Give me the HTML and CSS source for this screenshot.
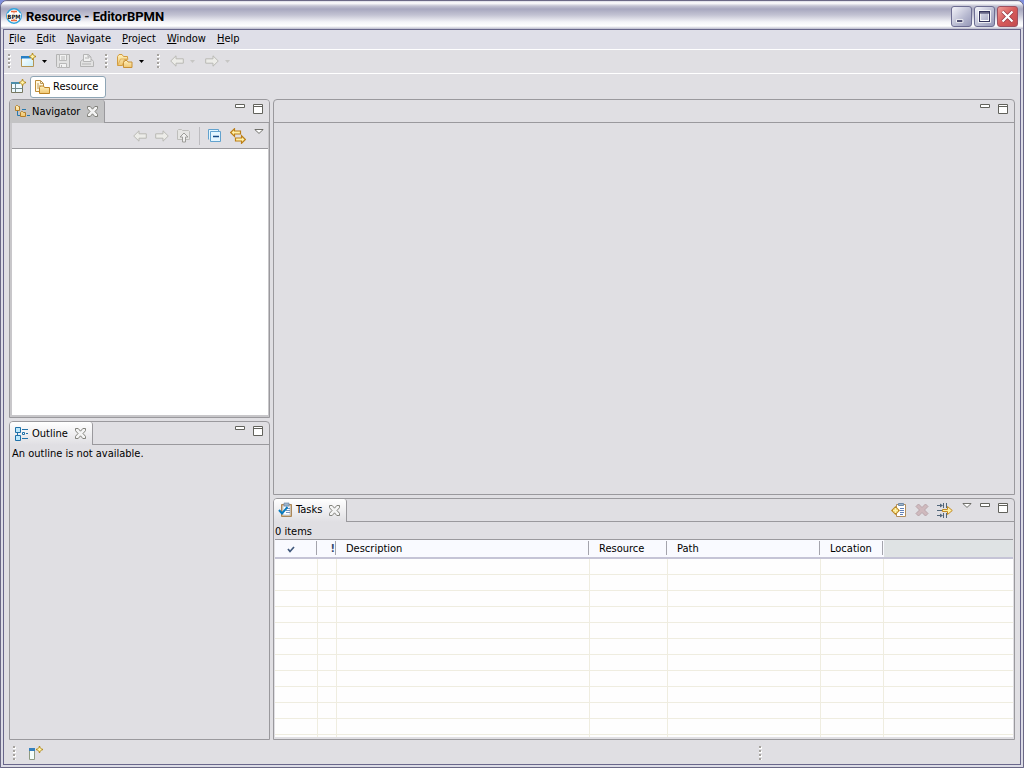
FILE: index.html
```html
<!DOCTYPE html>
<html lang="en">
<head>
<meta charset="utf-8">
<title>Resource - EditorBPMN</title>
<link rel="stylesheet" href="styles.css">
</head>
<body>
<svg class="defs" aria-hidden="true">
  <defs>
    <linearGradient id="gold" x1="0" y1="0" x2="0" y2="1"><stop offset="0" stop-color="#fff1bd"/><stop offset="1" stop-color="#efc773"/></linearGradient>
    <linearGradient id="blue" x1="0" y1="0" x2="1" y2="1"><stop offset="0" stop-color="#ffffff"/><stop offset="1" stop-color="#c4ecf8"/></linearGradient>
    <symbol id="spark" viewBox="0 0 7 7"><path d="M3.500 0v7M0 3.500h7" stroke="#b38b21" stroke-width="1.400"/><path d="M3.500 1 6 3.500 3.500 6 1 3.500z" fill="#fff3a8" stroke="#b38b21" stroke-width=".9"/></symbol>
    <symbol id="close" viewBox="0 0 11 11"><path d="M.500.500h2.700l2.300 2.700L7.800.500h2.700v2.200L8 5.500l2.500 2.800v2.200H7.800L5.500 7.800l-2.300 2.700H.500V8.300L3 5.500.500 2.700z" fill="#f4f4f4" stroke="#77776f" stroke-width=".9"/></symbol>
    <symbol id="min" viewBox="0 0 10 4"><path d="M.500.500h9v3h-9z" fill="#fff" stroke="#62625c"/></symbol>
    <symbol id="max" viewBox="0 0 10 10"><path d="M.500.500h9v9h-9zM.500 2.500h9" fill="#fff" stroke="#62625c"/></symbol>
    <symbol id="view" viewBox="0 0 10 5"><path d="M.800.500h8.400L5 4.400z" fill="#fff" stroke="#62625c" stroke-width=".9"/></symbol>
    <symbol id="back" viewBox="0 0 14 12"><path d="M.700 6 6 .800v3h7.300v4.400H6v3z" fill="#ecece8" stroke="#b9b9b4"/></symbol>
    <symbol id="forward" viewBox="0 0 14 12"><path d="M13.300 6 8 .800v3H.700v4.400H8v3z" fill="#ecece8" stroke="#b9b9b4"/></symbol>
    <symbol id="drop" viewBox="0 0 5 3"><path d="M0 0h5L2.500 3z" fill="currentColor"/></symbol>
  </defs>
</svg>
<div class="window">
  <header class="titlebar">
    <svg class="logo" viewBox="0 0 16 16" aria-hidden="true"><circle cx="8" cy="8" r="7.200" fill="#fff" stroke="#2fa4dc" stroke-width="1.500"/><path d="M5 3.500h6M5 12.500h6" stroke="#e8663c" stroke-width="1.300"/><path d="M8 3.500v9" stroke="#f08a60"/><path d="M1 5.500h14v5H1z" fill="#fff"/><text class="logo-text" x="8" y="10.500" text-anchor="middle">BPM</text></svg>
    <h1 class="title">Resource - EditorBPMN</h1>
    <button class="winbtn" aria-label="Minimize"><svg viewBox="0 0 21 21"><path d="M5 14h7v3H5z" fill="#36365e" stroke="#fff"/></svg></button>
    <button class="winbtn" aria-label="Maximize"><svg viewBox="0 0 21 21"><path d="M5 5h11v11H5z" fill="none" stroke="#fff" stroke-width="3"/><path d="M5 5h11v11H5zM5 6.500h11" fill="none" stroke="#34345c" stroke-width="1.200"/></svg></button>
    <button class="winbtn winbtn-close" aria-label="Close"><svg viewBox="0 0 21 21"><path d="m5 5 11 11M16 5 5 16" stroke="#8e3440" stroke-width="4"/><path d="m5 5 11 11M16 5 5 16" stroke="#fff" stroke-width="2.600"/></svg></button>
  </header>
  <div class="client">
    <nav class="menubar">
      <button class="menu"><u>F</u>ile</button><button class="menu"><u>E</u>dit</button><button class="menu"><u>N</u>avigate</button><button class="menu"><u>P</u>roject</button><button class="menu"><u>W</u>indow</button><button class="menu"><u>H</u>elp</button>
    </nav>
    <div class="toolbar">
      <span class="grip"></span>
      <button class="tool tool-first" aria-label="New"><svg class="i16" viewBox="0 0 16 16"><path d="M1.500 3.500h12v10h-12z" fill="url(#blue)" stroke="#b49554"/><path d="M1 3h10v3H1z" fill="#287fc4"/><path d="M2 5h9v1H2z" fill="#8bc2ea"/><use href="#spark" x="9" y="0" width="7" height="7"/></svg></button>
      <button class="arrow" aria-label="New options"><svg><use href="#drop"/></svg></button>
      <button class="tool tool-save" aria-label="Save" disabled><svg class="i16" viewBox="0 0 16 16"><path d="M1.500 1.500h13v13h-12l-1-1z" fill="#e2e2e2" stroke="#b3b3b3"/><path d="M4.500 1.500h7v6h-7zM4.500 10.500h7v4h-7zM6 4h4M6 6h4M6.500 12v2" fill="#f2f2f2" stroke="#b9b9b9"/></svg></button>
      <button class="tool tool-print" aria-label="Print" disabled><svg class="i16" viewBox="0 0 16 16"><path d="M1.500 8.500 4 6.500h9l1.500 2v5h-13z" fill="#e2e2e2" stroke="#b3b3b3"/><path d="M4.500 8.500v-7h5l2.500 2.500v4.500zM9 1.500V4h3M6 5h4M3 11h9" fill="#f1f1f1" stroke="#b5b5b5"/></svg></button>
      <span class="grip"></span>
      <button class="tool tool-open" aria-label="Open"><svg class="i16" viewBox="0 0 16 16"><path d="M.500 12.500v-9l1.500-2h3l1.500 2h4v3h-3l-2 6z" fill="url(#gold)" stroke="#d29c40"/><path d="M6.500 14.500v-5l1.500-2h2l1 1.500h4v5.500z" fill="url(#gold)" stroke="#c89036"/><path d="m1 12 2.500-6h8" fill="none" stroke="#dfb25f"/></svg></button>
      <button class="arrow" aria-label="Open options"><svg><use href="#drop"/></svg></button>
      <span class="grip"></span>
      <button class="tool tool-nav" aria-label="Back" disabled><svg class="i14"><use href="#back"/></svg></button>
      <button class="arrow" aria-label="Back history" disabled><svg><use href="#drop"/></svg></button>
      <button class="tool tool-next" aria-label="Forward" disabled><svg class="i14"><use href="#forward"/></svg></button>
      <button class="arrow" aria-label="Forward history" disabled><svg><use href="#drop"/></svg></button>
    </div>
    <div class="perspectives">
      <button class="tool" aria-label="Open Perspective"><svg class="i16" viewBox="0 0 16 16"><path d="M1.500 3.500h11v10h-11z" fill="#eefaff" stroke="#77775f"/><path d="M1 3h9v2H1z" fill="#4c8eaa"/><path d="M5.500 5v8M1.500 9.500h11" stroke="#718c8e"/><use href="#spark" x="9" y="0" width="7" height="7"/></svg></button>
      <button class="perspective" aria-pressed="true"><svg class="i16" viewBox="0 0 16 16"><path d="M.500 1.500h5l3 3v8h-8z" fill="#fff8df" stroke="#bd8d3b"/><path d="M5.500 1.500v3h3M2 5h2M2 7h4M2 9h2" fill="none" stroke="#bb9a5c"/><path d="M4.500 14.500v-6l1-1.500h3l1 1.500h5v6z" fill="url(#gold)" stroke="#bd8425"/></svg><span>Resource</span></button>
    </div>
    <main class="workspace">
      <div class="column side">
        <section class="panel navigator">
          <div class="panel-head">
            <h2 class="tab tab-active"><svg class="i16" viewBox="0 0 16 16"><path d="M3.500 5v6.500H7M8 5.500h4M13 11.500h3" fill="none" stroke="#2879ad"/><path d="M1.500 6.500v-4l1-1h1l1 1h1v4zM6.500 12.500v-4l1-1h1l1 1h2v4z" fill="url(#gold)" stroke="#b57e28"/></svg><span>Navigator</span><button class="close" aria-label="Close Navigator"><svg><use href="#close"/></svg></button></h2>
            <div class="panel-tools"><button class="ctl" aria-label="Minimize"><svg class="min"><use href="#min"/></svg></button><button class="ctl" aria-label="Maximize"><svg class="max"><use href="#max"/></svg></button></div>
          </div>
          <div class="nav-tools">
            <button class="tool" aria-label="Back" disabled><svg class="i14"><use href="#back"/></svg></button>
            <button class="tool" aria-label="Forward" disabled><svg class="i14"><use href="#forward"/></svg></button>
            <button class="tool" aria-label="Up" disabled><svg class="i14" viewBox="0 0 14 14"><path d="M.500 10.500v-9l1-1h3l1 1h6l1 1v8z" fill="#e5e5e3" stroke="#bebebb"/><path d="m7 4 4 4H8.500v5h-3V8H3z" fill="#f0f0ef" stroke="#9d9d99"/></svg></button>
            <span class="divider"></span>
            <button class="tool" aria-label="Collapse All"><svg class="i14" viewBox="0 0 14 14"><path d="M.500 10.500V.500h10v2M2.500 2.500h10v10h-10z" fill="#e4f6ff" stroke="#62a2ce"/><path d="M5 7.500h6" stroke="#174b86" stroke-width="1.500"/></svg></button>
            <button class="tool" aria-label="Link with Editor"><svg class="i16" viewBox="0 0 16 16"><path d="M.700 4.500 4.500.700V3h6v3h-6v2.300zM15.300 11.500 11.500 7.700V10h-6v3h6v2.300z" fill="#fff0a6" stroke="#bc7f17" stroke-width="1.200"/></svg></button>
            <button class="ctl view-menu" aria-label="View Menu"><svg class="view"><use href="#view"/></svg></button>
          </div>
          <div class="tree"></div>
        </section>
        <section class="panel">
          <div class="panel-head">
            <h2 class="tab"><svg class="i16" viewBox="0 0 16 16"><path d="M1.500 1.500h5v5h-5zM1.500 9.500h5v5h-5z" fill="#bce8fc" stroke="#1f70a8"/><path d="M8.500 6.500h2v2h-2z" fill="#fff" stroke="#1f70a8"/><path d="M8 3.500h6M12 7.500h2M8 12.500h6M3.500 7v2" fill="none" stroke="#2673a8"/></svg><span>Outline</span><button class="close" aria-label="Close Outline"><svg><use href="#close"/></svg></button></h2>
            <div class="panel-tools"><button class="ctl" aria-label="Minimize"><svg class="min"><use href="#min"/></svg></button><button class="ctl" aria-label="Maximize"><svg class="max"><use href="#max"/></svg></button></div>
          </div>
          <p class="message">An outline is not available.</p>
        </section>
      </div>
      <div class="column center">
        <section class="panel editor" aria-label="Editor">
          <div class="panel-head">
            <div class="panel-tools"><button class="ctl" aria-label="Minimize"><svg class="min"><use href="#min"/></svg></button><button class="ctl" aria-label="Maximize"><svg class="max"><use href="#max"/></svg></button></div>
          </div>
        </section>
        <section class="panel tasks">
          <div class="panel-head">
            <h2 class="tab"><svg class="i16" viewBox="0 0 16 16"><path d="M3.500 2.500h10v12h-10z" fill="#dfb47c" stroke="#a9875a"/><path d="M5 4h7v9H5z" fill="#fff" stroke="#b9cbe0"/><path d="M6 1h5v3H6z" fill="#9fb4cb" stroke="#718ba6" stroke-width=".7"/><path d="M8 6.500h4M8 8.500h4M8 10.500h4" stroke="#7696bf"/><path d="m1 8 3 3.500L9.500 5" fill="none" stroke="#087bbf" stroke-width="2"/></svg><span>Tasks</span><button class="close" aria-label="Close Tasks"><svg><use href="#close"/></svg></button></h2>
            <div class="task-actions">
              <button class="tool" aria-label="Add Task"><svg class="i16" viewBox="0 0 16 16"><path d="M5.500 2.500h9v12h-9z" fill="#fff" stroke="#b28d5b"/><path d="M7.500 1.500h5v2h-5z" fill="#9fb4cb" stroke="#718ba6"/><path d="M9 6.500h4M9 8.500h4M9 10.500h4M9 12.500h3" stroke="#6482b8"/><path d="M4.500 4 9 8.500 4.500 13 0 8.500z" fill="#bd8922"/><path d="M4.500 6v5M2 8.500h5" stroke="#fff2a6" stroke-width="2"/></svg></button>
              <button class="tool" aria-label="Delete" disabled><svg class="i14" viewBox="0 0 14 14"><path d="M1 3.500 3.500 1 7 4.500 10.500 1 13 3.500 9.500 7l3.500 3.500-2.500 2.500L7 9.500 3.500 13 1 10.500 4.500 7z" fill="#cfb9bd" stroke="#b9a5aa"/></svg></button>
              <button class="tool" aria-label="Filters"><svg class="i16" viewBox="0 0 16 16"><path d="M0 3.500h5M0 8.500h5M0 13.500h5M6.500 1v5M9.500 1v5M6.500 11v5M9.500 11v5" stroke="#52677b"/><path d="m3 1.500 3 2-3 2zM3 11.500l3 2-3 2z" fill="#52677b"/><path d="M5.500 7.500h5v-3l4.800 4-4.800 4v-3h-5z" fill="#fff0a0" stroke="#c18a24"/></svg></button>
            </div>
            <div class="panel-tools"><button class="ctl" aria-label="View Menu"><svg class="view"><use href="#view"/></svg></button><button class="ctl" aria-label="Minimize"><svg class="min"><use href="#min"/></svg></button><button class="ctl" aria-label="Maximize"><svg class="max"><use href="#max"/></svg></button></div>
          </div>
          <p class="count">0 items</p>
          <div class="table-box">
            <table class="grid">
              <colgroup><col class="c-done"><col class="c-priority"><col class="c-desc"><col class="c-resource"><col class="c-path"><col class="c-location"><col></colgroup>
              <thead><tr><th aria-label="Completed"><svg class="check" viewBox="0 0 8 7"><path d="m1 3 2 2.500L7 1" fill="none" stroke="#40587c" stroke-width="1.700"/></svg></th><th class="priority">!</th><th>Description</th><th>Resource</th><th>Path</th><th>Location</th><td class="filler"></td></tr></thead>
              <tbody>
                <tr><td></td><td></td><td></td><td></td><td></td><td></td><td></td></tr>
                <tr><td></td><td></td><td></td><td></td><td></td><td></td><td></td></tr>
                <tr><td></td><td></td><td></td><td></td><td></td><td></td><td></td></tr>
                <tr><td></td><td></td><td></td><td></td><td></td><td></td><td></td></tr>
                <tr><td></td><td></td><td></td><td></td><td></td><td></td><td></td></tr>
                <tr><td></td><td></td><td></td><td></td><td></td><td></td><td></td></tr>
                <tr><td></td><td></td><td></td><td></td><td></td><td></td><td></td></tr>
                <tr><td></td><td></td><td></td><td></td><td></td><td></td><td></td></tr>
                <tr><td></td><td></td><td></td><td></td><td></td><td></td><td></td></tr>
                <tr><td></td><td></td><td></td><td></td><td></td><td></td><td></td></tr>
                <tr><td></td><td></td><td></td><td></td><td></td><td></td><td></td></tr>
                <tr><td></td><td></td><td></td><td></td><td></td><td></td><td></td></tr>
              </tbody>
            </table>
          </div>
        </section>
      </div>
    </main>
    <footer class="status">
      <div class="status-left"><span class="grip"></span><button class="tool" aria-label="Show View as a Fast View"><svg class="i16" viewBox="0 0 16 16"><path d="M1.500 3.500h5v11h-5z" fill="#f5fffc" stroke="#8e9a82"/><path d="M1 3h6v3H1z" fill="#347fbd"/><use href="#spark" x="8" y="1" width="7" height="7"/></svg></button></div>
      <div class="status-right"><span class="grip"></span></div>
    </footer>
  </div>
</div>
</body>
</html>
```
FILE: styles.css
```css
* { box-sizing: border-box; }
body {
  margin: 0;
  background: #7f8fdc;
  color: #000;
  font: 11px/14px "DejaVu Sans Condensed", "DejaVu Sans", sans-serif;
}
h1, h2, p { margin: 0; font: inherit; }
button { margin: 0; padding: 0; border: 0; background: none; color: inherit; font: inherit; }
svg { display: block; flex: none; }
.defs { position: absolute; width: 0; height: 0; }
.i16 { width: 16px; height: 16px; }
.i14 { width: 14px; height: 14px; }

.window {
  display: flex;
  flex-direction: column;
  height: 100vh;
  padding: 0 2px 2px;
  border: 1px solid #6a6885;
  border-radius: 7px 7px 0 0;
  background: #dcdce6;
  overflow: hidden;
}
.titlebar {
  display: flex;
  align-items: center;
  gap: 2px;
  height: 28px;
  margin: 0 -2px;
  padding: 2px 5px 0;
  background: linear-gradient(#d9d9e4 0, #fff 2px, #c2c2d2 5px, #a7a7bf 8px, #c3c3d3 14px, #f4f4f8 21px, #fff 25px, #b9b9cb 28px);
}
.logo { width: 16px; height: 16px; }
.logo-text { font: bold 6px "DejaVu Sans Condensed", sans-serif; fill: #111; }
.title { flex: 1; padding: 1px 0 0 2px; font: bold 13px/16px Roboto, sans-serif; }
.winbtn {
  width: 21px;
  height: 21px;
  border: 1px solid #6d6d92;
  border-radius: 3px;
  background: linear-gradient(135deg, #f4f4fa, #b7b9d0 60%, #9698b8);
}
.winbtn svg { width: 19px; height: 19px; }
.winbtn-close { border-color: #9e5060; background: linear-gradient(135deg, #ee9d97, #d75b5b 50%, #c34b50); }

.client {
  flex: 1;
  display: flex;
  flex-direction: column;
  min-height: 0;
  border: 1px solid #69678b;
  background: #e0dfe3;
}
.menubar { display: flex; align-items: flex-start; gap: 11px; height: 20px; padding: 2px 5px 0; background: #dfdfe8; border-bottom: 1px solid #fff; }
.toolbar { display: flex; align-items: center; height: 24px; padding: 0 0 1px 4px; border-bottom: 1px solid #fff; }
.grip {
  width: 3px;
  height: 14px;
  background:
    repeating-linear-gradient(#a5a29e 0 2px, transparent 2px 4px) 0 0 / 2px 14px no-repeat,
    repeating-linear-gradient(transparent 0 1px, #fff 1px 3px, transparent 3px 4px);
}
.arrow { width: 5px; margin-left: 6px; }
.arrow:disabled { color: #c6c6c4; }
.arrow svg { width: 5px; height: 3px; }
.tool-first { margin-left: 9px; }
.tool-save { margin-left: 8px; }
.tool-print { margin: 0 10px 0 8px; }
.tool-open { margin-left: 9px; }
.arrow + .grip { margin-left: 13px; }
.tool-nav { margin-left: 10px; }
.tool-next { margin-left: 10px; }
.perspectives { display: flex; align-items: center; gap: 4px; height: 25px; padding-left: 6px; }
.perspective {
  display: flex;
  align-items: center;
  gap: 2px;
  height: 22px;
  padding: 0 7px 0 4px;
  border: 1px solid #8ea5b5;
  border-radius: 3px;
  background: #fff;
}

.workspace { flex: 1; display: flex; gap: 3px; min-height: 0; padding: 0 5px; }
.column { display: flex; flex-direction: column; gap: 3px; min-width: 0; }
.side { flex: 0 0 261px; }
.center { flex: 1; }
.panel {
  flex: 1 1 0;
  display: flex;
  flex-direction: column;
  min-height: 0;
  border: 1px solid #9a999d;
  border-radius: 4px 4px 0 0;
}
.editor { flex-grow: 396; }
.tasks { flex-grow: 242; }
.panel-head { display: flex; flex: none; height: 23px; border-bottom: 1px solid #9a999d; }
.tab {
  display: flex;
  align-items: center;
  gap: 2px;
  height: 23px;
  padding: 0 6px 0 4px;
  border-right: 1px solid #9a999d;
  border-radius: 3px 3px 0 0;
  background: linear-gradient(#fff, #e0dfe3);
}
.tab-active { background: #c3c3c4; }
.close { margin-left: 5px; }
.close svg { width: 11px; height: 11px; }
.panel-tools { display: flex; gap: 8px; margin-left: auto; padding: 4px 6px 0 0; }
.ctl { display: flex; align-items: flex-start; height: 10px; }
.min { width: 10px; height: 4px; }
.max { width: 10px; height: 10px; }
.view { width: 10px; height: 5px; }
.navigator { background: #c8c7ca; }
.navigator .panel-head { background: #e0dfe3; border-radius: 3px 3px 0 0; }
.nav-tools {
  display: flex;
  align-items: center;
  justify-content: flex-end;
  gap: 8px;
  height: 26px;
  margin: 0 1px 0 2px;
  padding-right: 4px;
  border-bottom: 1px solid #9a999d;
  background: #e0dfe3;
}
.divider { width: 1px; height: 18px; background: #bdbcc0; }
.view-menu { height: 14px; }
.tree { flex: 1; margin: 0 1px 2px 2px; background: #fff; }
.message { padding: 2px; }
.task-actions { display: flex; align-items: center; gap: 8px; margin-left: auto; padding: 1px 9px 0 0; }
.tasks .panel-tools { margin-left: 0; }
.count { flex: none; height: 17px; padding: 3px 1px 0; }
.table-box { flex: 1; min-height: 0; margin: 0 1px 2px; border-top: 1px solid #9a999d; background: #fefefe; overflow: hidden; }
.grid { width: 100%; table-layout: fixed; border-collapse: separate; border-spacing: 0; }
.c-done { width: 43px; }
.c-priority { width: 19px; }
.c-desc { width: 253px; }
.c-resource { width: 78px; }
.c-path { width: 153px; }
.c-location { width: 63px; }
.grid th, .grid .filler { height: 19px; padding: 2px 0 0 9px; border: 0; border-bottom: 2px solid #c5c4d6; font-weight: normal; text-align: left; background: linear-gradient(#a4a4ac, #a4a4ac) right 1px center / 1px 14px no-repeat #f9faff; }
.grid .filler { background: #dfe3e4; }
.grid .priority { padding: 2px 2px 0 0; text-align: right; color: #34476c; font-weight: bold; }
.grid td { height: 16px; padding: 0; border-right: 1px solid #efede0; border-bottom: 1px solid #efede0; }
.grid td:last-child { border-right: 0; }
.check { width: 8px; height: 7px; margin-left: 3px; }
.status { display: flex; height: 24px; padding-left: 9px; }
.status-left, .status-right { display: flex; align-items: center; gap: 12px; padding-top: 2px; }
.status-left { flex: 746; }
.status-right { flex: 261; }
```
